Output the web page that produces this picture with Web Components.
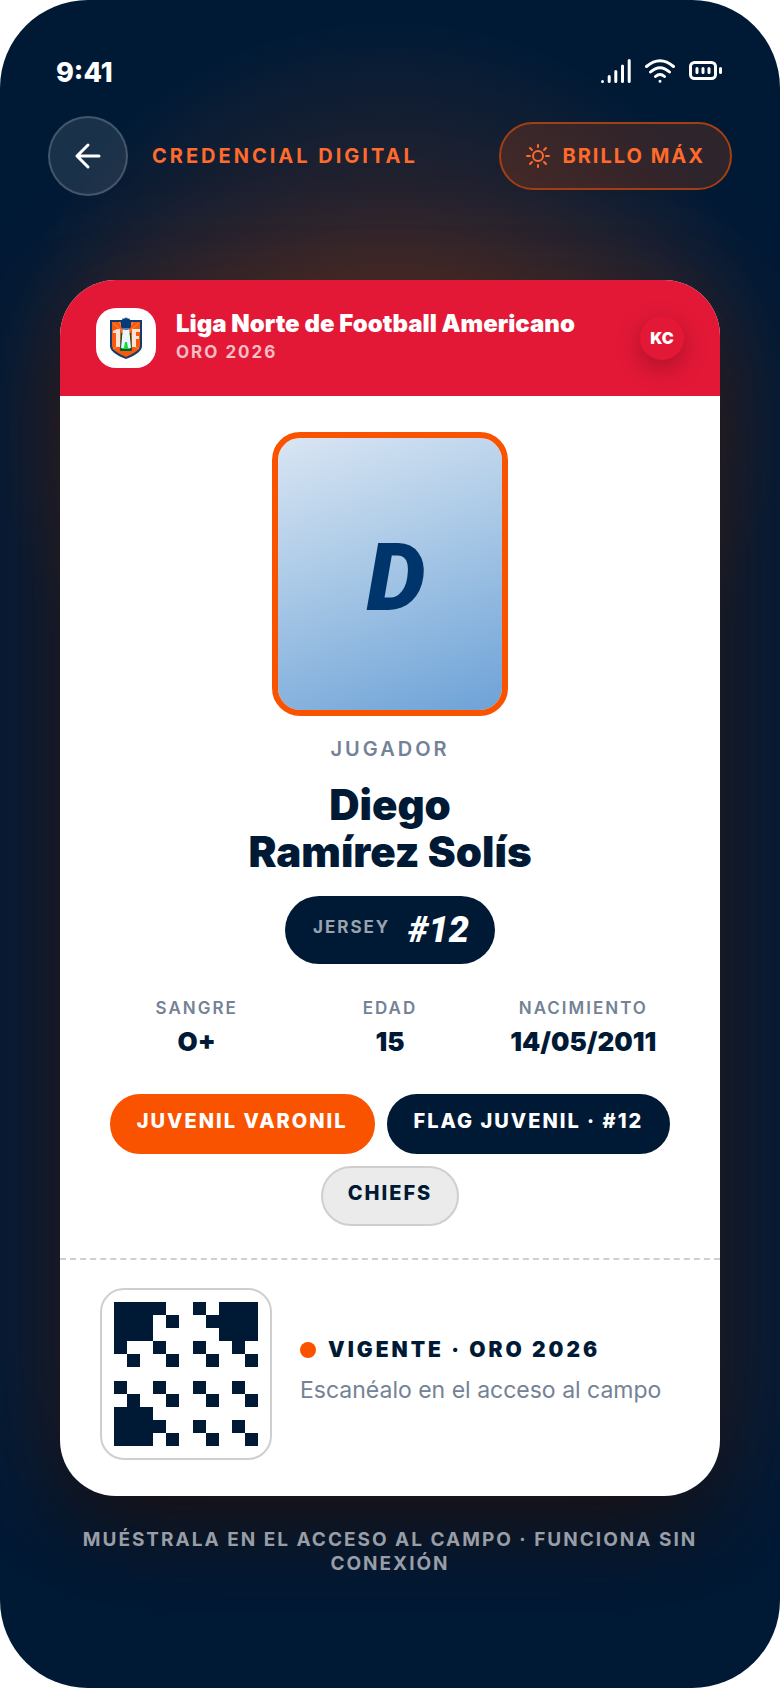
<!DOCTYPE html>
<html lang="es">
    <head>
        <meta charset="utf-8" />
        <meta name="viewport" content="width=device-width, initial-scale=1" />
        <title>Credencial digital</title>
        <style>
            body {
                margin: 0;
                background: #fff;
                color: #fff;
                font-family: Inter, "Liberation Sans", sans-serif;
                --navy: #001a36;
                --orange: #fa5300;
                --ember: #ff6b2c;
                --red: #e31837;
                --slate: #748296;
                --line: #cfcfcf;
                --display: Roboto, "Liberation Sans", sans-serif;
            }
        </style>
    </head>
    <body>
        <credential-screen>
            <status-bar slot="status" time="9:41"></status-bar>
            <top-bar slot="top">
                Credencial digital
                <span slot="action">Brillo máx</span>
            </top-bar>
            <player-card>
                <league-header slot="header" team="KC">
                    Liga Norte de Football Americano
                    <span slot="season">Oro 2026</span>
                </league-header>
                <player-photo>D</player-photo>
                <player-name role-label="Jugador">
                    Diego<br />Ramírez Solís
                </player-name>
                <jersey-number label="Jersey">#12</jersey-number>
                <stat-row>
                    <stat-item label="Sangre">O+</stat-item>
                    <stat-item label="Edad">15</stat-item>
                    <stat-item label="Nacimiento">14/05/2011</stat-item>
                </stat-row>
                <chip-list>
                    <team-chip kind="primary">Juvenil varonil</team-chip>
                    <team-chip>Flag juvenil · #12</team-chip>
                    <team-chip kind="muted">Chiefs</team-chip>
                </chip-list>
                <access-pass slot="footer">
                    Vigente · Oro 2026
                    <span slot="hint">Escanéalo en el acceso al campo</span>
                </access-pass>
            </player-card>
            <span slot="note"
                >Muéstrala en el acceso al campo · Funciona sin conexión</span
            >
        </credential-screen>

        <script type="text/javascript">
            // Registers an element whose shadow root is built from its markup
            function define(name, render) {
                customElements.define(
                    name,
                    class extends HTMLElement {
                        connectedCallback() {
                            if (this.shadowRoot) return;
                            this.attachShadow({ mode: "open" }).innerHTML =
                                `<style>* { box-sizing: border-box; }</style>` +
                                render(this);
                        }
                    }
                );
            }

            define(
                "credential-screen",
                () => `
                <style>
                    :host {
                        display: flex;
                        flex-direction: column;
                        box-sizing: border-box;
                        min-height: 100vh;
                        padding: 48px 48px 96px;
                        border-radius: 88px;
                        overflow: hidden;
                        background:
                            radial-gradient(circle 400px at 50% 420px,
                                rgba(250, 83, 0, 0.33), transparent),
                            var(--navy);
                    }
                    main { padding: 84px 12px 0; }
                    .note {
                        margin: 32px 12px 0;
                        color: #999ea6;
                        font-size: 19px;
                        font-weight: 700;
                        line-height: 24px;
                        letter-spacing: 2px;
                        text-align: center;
                        text-transform: uppercase;
                    }
                </style>
                <slot name="status"></slot>
                <slot name="top"></slot>
                <main><slot></slot></main>
                <p class="note"><slot name="note"></slot></p>`
            );

            define(
                "status-bar",
                (el) => `
                <style>
                    :host {
                        display: flex;
                        justify-content: space-between;
                        align-items: center;
                        height: 48px;
                        padding: 0 8px;
                        font-size: 27px;
                        font-weight: 800;
                    }
                    .icons { display: flex; gap: 12px; margin-bottom: 4px; }
                    svg {
                        display: block;
                        fill: none;
                        stroke: #fff;
                        stroke-linecap: round;
                        stroke-linejoin: round;
                    }
                </style>
                <span>${el.getAttribute("time")}</span>
                <div class="icons">
                    <svg width="32" height="28" viewBox="0 0 32 28" stroke-width="3">
                        <path d="M2.500 25.500v0M9.200 20.500v5M15.800 15.500v10M22.500 10v15.500M29.200 4.500v21" />
                    </svg>
                    <svg width="32" height="28" viewBox="0 0 32 28" stroke-width="3">
                        <path d="M2.500 10.500Q16-1 29.500 10.500M6.500 16Q16 7.500 25.500 16M11.500 20.500Q16 16.500 20.500 20.500M16 25.200v0" />
                    </svg>
                    <svg width="36" height="28" viewBox="0 0 36 28" stroke-width="3">
                        <rect x="2.500" y="6.500" width="25" height="16" rx="4" />
                        <path d="M9 12.500v4M15 12.500v4M21 12.500v4M32.500 12.500v4" />
                    </svg>
                </div>`
            );

            define(
                "top-bar",
                () => `
                <style>
                    :host {
                        display: flex;
                        align-items: center;
                        gap: 24px;
                        margin-top: 20px;
                        color: var(--ember);
                    }
                    h1, button {
                        font: 700 20px/28px Inter, "Liberation Sans", sans-serif;
                        text-transform: uppercase;
                    }
                    h1 { flex: 1; margin: 0; letter-spacing: 3px; }
                    button {
                        display: flex;
                        align-items: center;
                        justify-content: center;
                        color: inherit;
                        cursor: pointer;
                    }
                    .back {
                        width: 80px;
                        height: 80px;
                        padding: 0;
                        border: 2px solid rgba(255, 255, 255, 0.18);
                        border-radius: 50%;
                        background: rgba(255, 255, 255, 0.1);
                        color: #fff;
                    }
                    .bright {
                        gap: 12px;
                        height: 68px;
                        padding: 0 25px;
                        border: 2px solid #a43f12;
                        border-radius: 34px;
                        background: rgba(250, 83, 0, 0.18);
                        letter-spacing: 2px;
                    }
                    svg {
                        fill: none;
                        stroke: currentColor;
                        stroke-linecap: round;
                        stroke-linejoin: round;
                    }
                </style>
                <button class="back" aria-label="Volver">
                    <svg width="32" height="32" viewBox="0 0 32 32" stroke-width="3">
                        <path d="M27 16H5M16 5 5 16l11 11" />
                    </svg>
                </button>
                <h1><slot></slot></h1>
                <button class="bright">
                    <svg width="24" height="24" viewBox="0 0 24 24" stroke-width="2">
                        <circle cx="12" cy="12" r="5" />
                        <path d="M12 1v2M12 21v2M1 12h3M20 12h3M4 4l2 2M18 18l2 2M4 20l2-2M18 6l2-2" />
                    </svg>
                    <slot name="action"></slot>
                </button>`
            );

            define(
                "player-card",
                () => `
                <style>
                    :host {
                        display: block;
                        border-radius: 56px;
                        overflow: hidden;
                        background: #fff;
                        color: var(--navy);
                        box-shadow: 0 0 120px rgba(250, 83, 0, 0.18),
                            0 40px 80px rgba(0, 0, 0, 0.5);
                    }
                    .body {
                        display: flex;
                        flex-direction: column;
                        align-items: center;
                        padding: 36px 40px 32px;
                    }
                </style>
                <slot name="header"></slot>
                <div class="body"><slot></slot></div>
                <slot name="footer"></slot>`
            );

            define(
                "league-header",
                (el) => `
                <style>
                    :host {
                        display: flex;
                        align-items: center;
                        gap: 20px;
                        padding: 28px 36px;
                        background: var(--red);
                        color: #fff;
                    }
                    .logo {
                        display: grid;
                        place-items: center;
                        width: 60px;
                        height: 60px;
                        border-radius: 20px;
                        background: #fff;
                    }
                    .text { flex: 1; }
                    h2 {
                        margin: 0;
                        font-size: 24px;
                        font-weight: 900;
                        line-height: 28px;
                    }
                    p {
                        margin: 0;
                        color: rgba(255, 255, 255, 0.72);
                        font-size: 17px;
                        font-weight: 700;
                        line-height: 28px;
                        letter-spacing: 2px;
                        text-transform: uppercase;
                    }
                    .team {
                        display: grid;
                        place-items: center;
                        width: 44px;
                        height: 44px;
                        border-radius: 50%;
                        background: var(--red);
                        box-shadow: 0 8px 24px rgba(0, 0, 0, 0.25);
                        font-size: 16px;
                        font-weight: 900;
                        line-height: 20px;
                    }
                </style>
                <div class="logo">
                    <svg width="32" height="42" viewBox="0 0 32 42">
                        <path d="M0 3h32v26q0 7-16 13Q0 36 0 29z" fill="#123c70" />
                        <path d="M2 5h28v24q0 5-14 11Q2 34 2 29z" fill="#f95a0b" />
                        <path d="M16 17 3 6M16 17 9 5M16 17 29 6M16 17 23 5M16 24 3 32M16 24 29 32" stroke="#ff8a4d" />
                        <path d="M3 14l4-2h3v18H6V16H3zM22 12h8v3h-4v4h3v3h-3v8h-4z" fill="#ffe3d6" />
                        <path d="M11 16h10l1 18H10z" fill="#0a5a35" />
                        <path d="M12 18h8v14h-8z" fill="#10dc38" />
                        <path d="M13 11h6l2 20h-3l-1-6h-2l-1 6h-3z" fill="#eef4ff" />
                        <path d="M13 1h6l2 3v6l-3 3h-4l-3-3V4z" fill="#063b7a" />
                        <path d="M12 2q4-3 8 0M13 12h6" stroke="#a9c4dc" fill="none" />
                    </svg>
                </div>
                <div class="text">
                    <h2><slot></slot></h2>
                    <p><slot name="season"></slot></p>
                </div>
                <div class="team">${el.getAttribute("team")}</div>`
            );

            define(
                "player-photo",
                () => `
                <style>
                    :host {
                        display: grid;
                        place-items: center;
                        box-sizing: border-box;
                        width: 236px;
                        height: 284px;
                        padding: 8px 0 0 12px;
                        border: 6px solid var(--orange);
                        border-radius: 28px;
                        background: linear-gradient(160deg, #d9e5f3, #b0cde8 38%, #6da2d7) padding-box;
                        color: #00356b;
                        font: italic 900 94px/1 var(--display);
                    }
                </style>
                <slot></slot>`
            );

            define(
                "player-name",
                (el) => `
                <style>
                    :host { display: block; text-align: center; }
                    p {
                        margin: 19px 0 18px;
                        color: var(--slate);
                        font-size: 20px;
                        font-weight: 600;
                        line-height: 28px;
                        letter-spacing: 3px;
                        text-transform: uppercase;
                    }
                    h3 {
                        margin: 0;
                        font-size: 42px;
                        font-weight: 900;
                        line-height: 47px;
                    }
                </style>
                <p>${el.getAttribute("role-label")}</p>
                <h3><slot></slot></h3>`
            );

            define(
                "jersey-number",
                (el) => `
                <style>
                    :host {
                        display: flex;
                        align-items: center;
                        gap: 18px;
                        box-sizing: border-box;
                        height: 68px;
                        margin-top: 21px;
                        padding: 0 26px 0 28px;
                        border-radius: 34px;
                        background: var(--navy);
                        color: #fff;
                    }
                    .label {
                        margin-bottom: 6px;
                        color: #99a3af;
                        font-size: 17px;
                        font-weight: 700;
                        letter-spacing: 2px;
                        text-transform: uppercase;
                    }
                    .number { font: italic 900 36px/68px var(--display); }
                </style>
                <span class="label">${el.getAttribute("label")}</span>
                <span class="number"><slot></slot></span>`
            );

            define(
                "stat-row",
                () => `
                <style>
                    :host {
                        display: grid;
                        grid-template-columns: repeat(3, 1fr);
                        align-self: stretch;
                        margin-top: 30px;
                    }
                </style>
                <slot></slot>`
            );

            define(
                "stat-item",
                (el) => `
                <style>
                    :host {
                        display: block;
                        font-size: 26px;
                        font-weight: 900;
                        line-height: 40px;
                        text-align: center;
                    }
                    .label {
                        display: block;
                        color: var(--slate);
                        font-size: 17px;
                        font-weight: 600;
                        line-height: 28px;
                        letter-spacing: 2px;
                        text-transform: uppercase;
                    }
                </style>
                <span class="label">${el.getAttribute("label")}</span>
                <slot></slot>`
            );

            define(
                "chip-list",
                () => `
                <style>
                    :host {
                        display: flex;
                        flex-wrap: wrap;
                        justify-content: center;
                        gap: 12px;
                        margin-top: 32px;
                    }
                </style>
                <slot></slot>`
            );

            define(
                "team-chip",
                () => `
                <style>
                    :host {
                        box-sizing: border-box;
                        height: 60px;
                        padding: 0 25px;
                        border: 2px solid var(--navy);
                        border-radius: 30px;
                        background: var(--navy);
                        color: #fff;
                        font-size: 20px;
                        font-weight: 800;
                        line-height: 50px;
                        letter-spacing: 2px;
                        text-transform: uppercase;
                    }
                    :host([kind="primary"]) {
                        border-color: var(--orange);
                        background: var(--orange);
                    }
                    :host([kind="muted"]) {
                        border-color: var(--line);
                        background: #ebebeb;
                        color: var(--navy);
                    }
                </style>
                <slot></slot>`
            );

            // One string per row of the code, # is a dark module
            const qrRows = [
                "####..#.###",
                "###.#..####",
                "###.....###",
                "#..#..#..#.",
                ".#..#..#..#",
                "...........",
                "#..#..#..#.",
                ".#..#..#..#",
                "###........",
                "####..#..#.",
                "###.#..#..#",
            ];
            const qrPath = qrRows
                .map((row, y) =>
                    [...row]
                        .map((c, x) => (c === "#" ? `M${x} ${y}h1v1h-1z` : ""))
                        .join("")
                )
                .join("");

            define(
                "access-pass",
                () => `
                <style>
                    :host {
                        display: flex;
                        align-items: center;
                        gap: 28px;
                        padding: 28px 40px 36px;
                        border-top: 2px dashed var(--line);
                    }
                    .qr {
                        padding: 12px;
                        border: 2px solid var(--line);
                        border-radius: 24px;
                    }
                    svg { display: block; fill: var(--navy); }
                    .text { flex: 1; padding-bottom: 8px; }
                    .state {
                        display: flex;
                        align-items: center;
                        gap: 12px;
                        margin: 0;
                        font-size: 21px;
                        font-weight: 900;
                        line-height: 40px;
                        letter-spacing: 3px;
                        text-transform: uppercase;
                    }
                    .dot {
                        width: 16px;
                        height: 16px;
                        border-radius: 50%;
                        background: var(--orange);
                    }
                    .hint {
                        margin: 0;
                        color: var(--slate);
                        font-size: 23px;
                        line-height: 40px;
                    }
                </style>
                <div class="qr">
                    <svg width="144" height="144" viewBox="0 0 11 11" shape-rendering="crispEdges" role="img" aria-label="QR">
                        <path d="${qrPath}" />
                    </svg>
                </div>
                <div class="text">
                    <p class="state"><span class="dot"></span><span><slot></slot></span></p>
                    <p class="hint"><slot name="hint"></slot></p>
                </div>`
            );
        </script>
    </body>
</html>
